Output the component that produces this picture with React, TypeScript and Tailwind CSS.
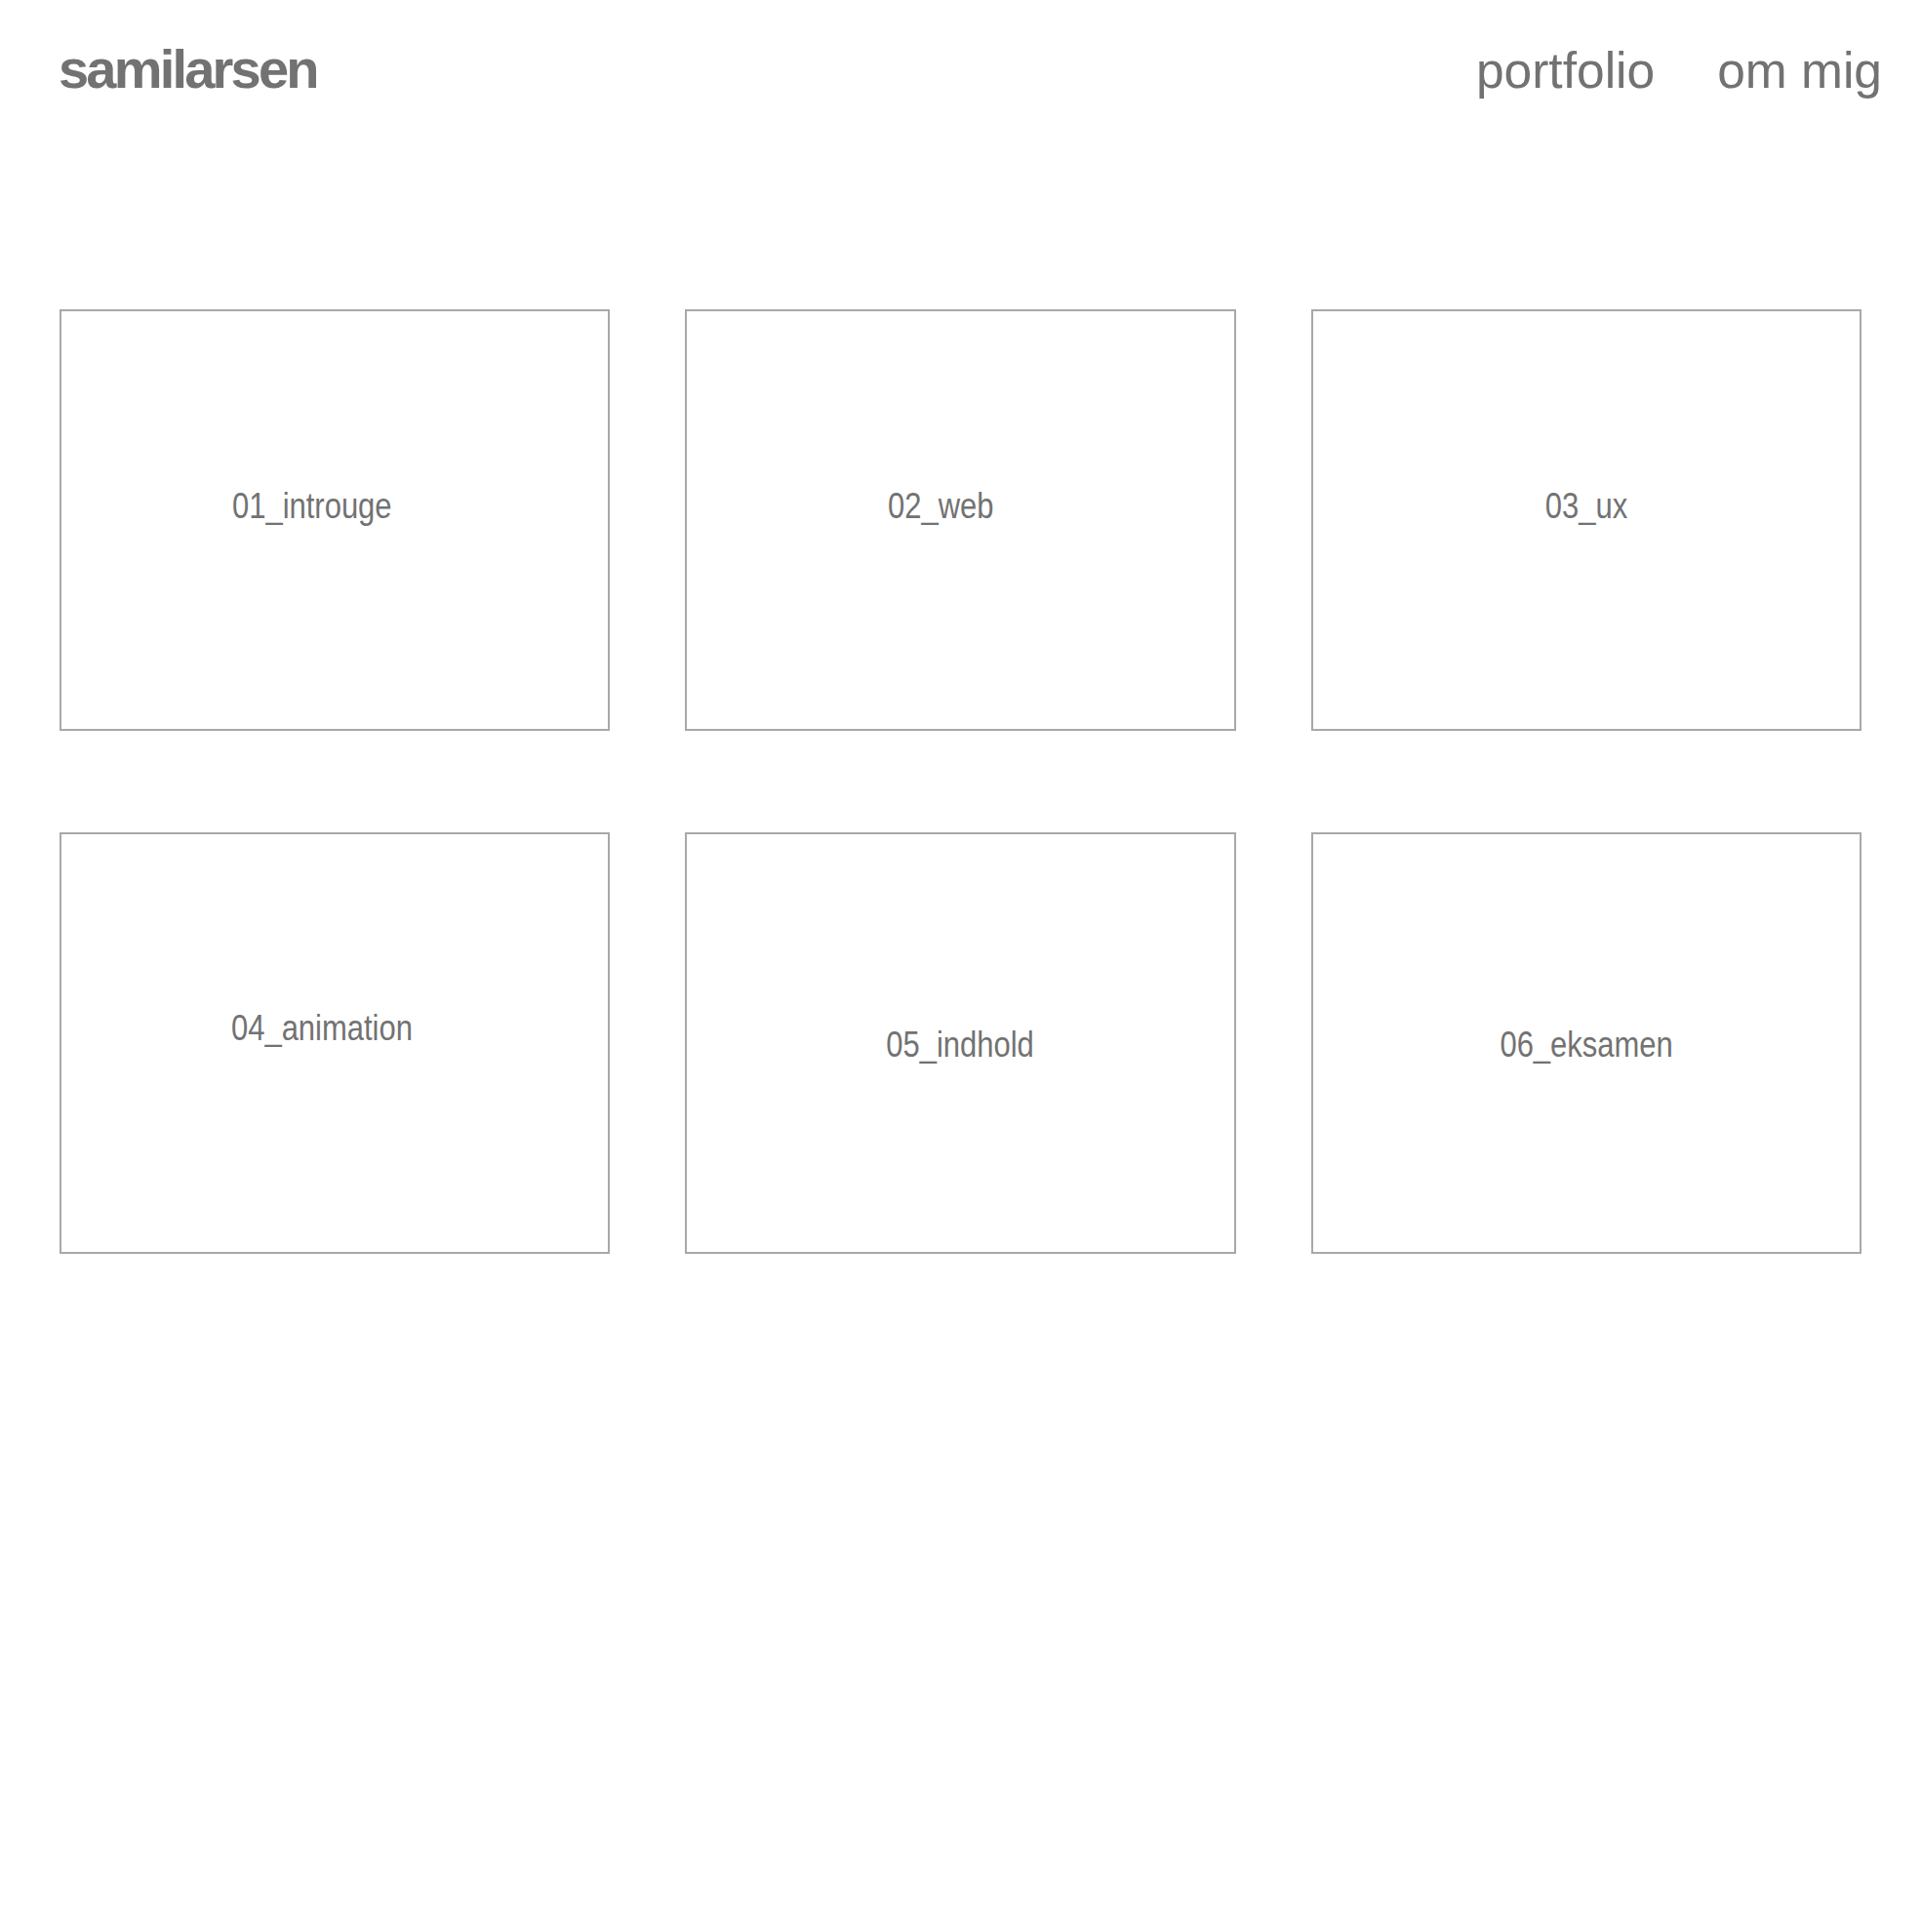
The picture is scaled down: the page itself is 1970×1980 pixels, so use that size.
const projects = [
  { label: "01_introuge", box: "justify-start pl-[175px] pb-[28px]", text: "origin-left" },
  { label: "02_web", box: "justify-start pl-[206px] pb-[28px]", text: "origin-left" },
  { label: "03_ux", box: "justify-center pb-[28px]", text: "" },
  { label: "04_animation", box: "justify-start pl-[174px] pb-[30px]", text: "origin-left" },
  { label: "05_indhold", box: "justify-center pt-[4px]", text: "" },
  { label: "06_eksamen", box: "justify-center pt-[4px]", text: "" },
];

const App = () => {
  return (
    <div
      className="min-h-[1980px] w-full bg-white text-[#727272]"
      style={{ fontFamily: '"Liberation Sans", Arial, sans-serif' }}
    >
      <header className="flex items-baseline justify-between pl-[60px] pr-[41px] pt-[43px]">
        <a href="#" className="text-[56px] font-bold leading-none tracking-[-0.05em]">
          samilarsen
        </a>

        <nav className="flex items-baseline gap-16 text-[51.5px] leading-none">
          <a href="#">portfolio</a>
          <a href="#">om mig</a>
        </nav>
      </header>

      <main className="pl-[61px] pr-[62px] pt-[218px]">
        <div className="grid grid-cols-3 gap-x-[77px] gap-y-[104px]">
          {projects.map((p) => (
            <a
              key={p.label}
              href="#"
              className={`flex h-[432px] items-center border-2 border-[#a8a8a8] ${p.box}`}
            >
              <span
                className={`inline-block scale-x-[0.86] text-[36px] leading-none ${p.text}`}
              >
                {p.label}
              </span>
            </a>
          ))}
        </div>
      </main>
    </div>
  );
};

export default App;
